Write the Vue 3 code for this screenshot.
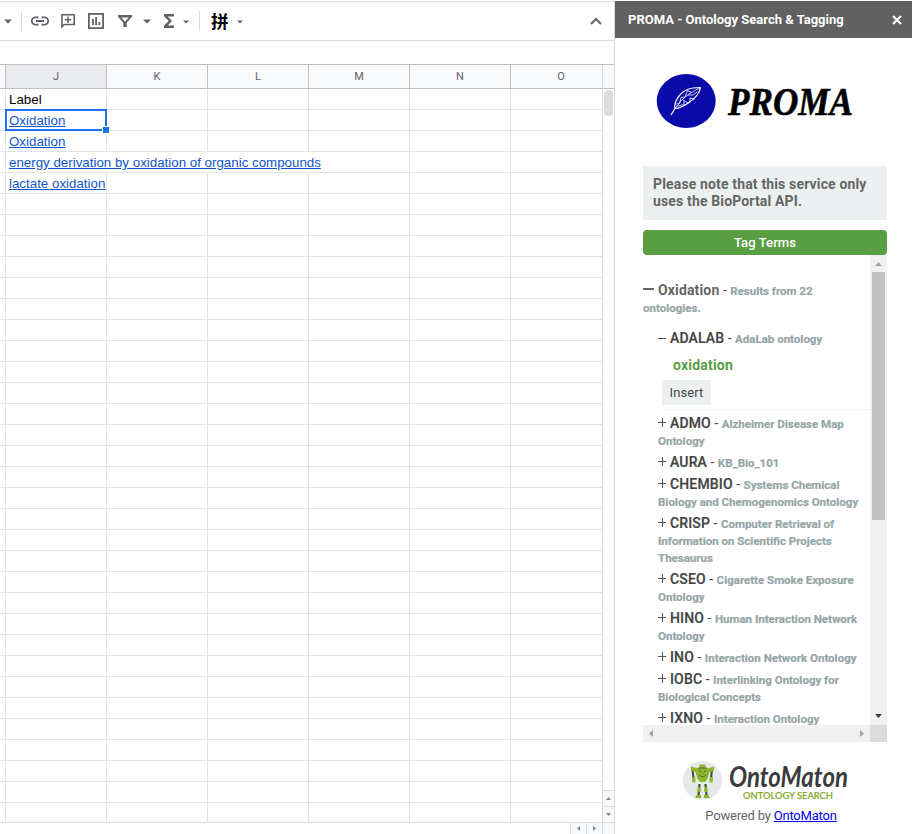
<script setup>
const columns = ['J', 'K', 'L', 'M', 'N', 'O']
const values = [
  { text: 'Label' },
  { text: 'Oxidation', link: true, selected: true },
  { text: 'Oxidation', link: true },
  { text: 'energy derivation by oxidation of organic compounds', link: true, span: 3 },
  { text: 'lactate oxidation', link: true },
]
const rows = Array.from({ length: 35 }, (_, i) => values[i] || { text: '' })

const ontologies = [
  { id: 'ADMO', lines: ['Alzheimer Disease Map', 'Ontology'] },
  { id: 'AURA', lines: ['KB_Bio_101'] },
  { id: 'CHEMBIO', lines: ['Systems Chemical', 'Biology and Chemogenomics Ontology'] },
  { id: 'CRISP', lines: ['Computer Retrieval of', 'Information on Scientific Projects', 'Thesaurus'] },
  { id: 'CSEO', lines: ['Cigarette Smoke Exposure', 'Ontology'] },
  { id: 'HINO', lines: ['Human Interaction Network', 'Ontology'] },
  { id: 'INO', lines: ['Interaction Network Ontology'] },
  { id: 'IOBC', lines: ['Interlinking Ontology for', 'Biological Concepts'] },
  { id: 'IXNO', lines: ['Interaction Ontology'] },
]
</script>

<template>
  <div class="page">
    <main class="sheet">
      <div class="toolbar">
        <svg width="614" height="38" viewBox="0 2 614 38" fill="#5f6368">
          <path d="M4 19.500h8l-4 4z M143 19.500h8l-4 4z" />
          <path d="M183 20.500h6l-3 3z M237 20.500h6l-3 3z" />
          <path d="M21 11h1v20h-1z M199 11h1v20h-1z" fill="#dadce0" />
          <path d="M38.500 17.300H35.500a3.700 3.700 0 0 0 0 7.400h3 M41.500 17.300h3a3.700 3.700 0 0 1 0 7.400h-3 M36 21h8" fill="none" stroke="#5f6368" stroke-width="1.800" />
          <path d="M62 14.800h12.200v9.700H64.300L62 26.800z" fill="none" stroke="#5f6368" stroke-width="1.600" />
          <path d="M67.300 16.600h1.500v2.400h2.400v1.500h-2.400v2.400h-1.500v-2.400h-2.400V19h2.400z" />
          <path d="M88.900 13.900h14.200v14.200H88.900z" fill="none" stroke="#5f6368" stroke-width="1.800" />
          <path d="M92 19h1.800v6H92z M95.200 17H97v8h-1.800z M98.400 22h1.800v3h-1.800z" />
          <path d="M118 15h14v1.800l-5.300 6V27h-3.400v-4.200l-5.300-6z M121.300 17.500l3.700 4.200 3.700-4.200z" fill-rule="evenodd" />
          <path d="M164 14h10v2.500h-6.300l4.300 4.500-4.300 4.500h6.300V28h-10v-2.200l4.800-4.800-4.800-4.800z" />
          <path d="M591 24l5-5 5 5" fill="none" stroke="#5f6368" stroke-width="2" />
          <text x="211" y="28" class="pin">拼</text>
        </svg>
      </div>
      <div class="formula"></div>
      <div class="body">
        <div class="grid">
          <div class="row head">
            <span class="edge"></span>
            <span v-for="(c, i) in columns" :key="c" class="cell" :class="{ active: i === 0 }">{{ c }}</span>
          </div>
          <div class="cells">
            <div v-for="(r, i) in rows" :key="i" class="row">
              <span class="edge"></span>
              <span v-for="(c, j) in columns" :key="c" class="cell" :class="{ open: r.span && j < r.span }">
                <template v-if="j === 0 && r.text">
                  <a v-if="r.link" class="link">{{ r.text }}</a>
                  <span v-else>{{ r.text }}</span>
                </template>
                <i v-if="j === 0 && r.selected" class="selection"></i>
              </span>
            </div>
          </div>
        </div>
        <div class="vscroll">
          <div class="corner"></div>
          <div class="track"><div class="thumb"></div></div>
          <div class="step"><svg width="5" height="3"><path d="M2.500 0L5 3H0z" /></svg></div>
          <div class="step"><svg width="5" height="3"><path d="M2.500 3L5 0H0z" /></svg></div>
        </div>
      </div>
      <div class="hscroll">
        <div class="hstep"><svg width="3" height="5"><path d="M0 2.500L3 0v5z" /></svg></div>
        <div class="hstep"><svg width="3" height="5"><path d="M3 2.500L0 0v5z" /></svg></div>
        <div class="hend"></div>
      </div>
    </main>

    <aside class="sidebar">
      <header class="title">
        <span>PROMA - Ontology Search &amp; Tagging</span>
        <svg width="10" height="10"><path d="M1 1l8 8M9 1L1 9" stroke="#fff" stroke-width="2" /></svg>
      </header>
      <div class="content">
        <svg class="logo" width="244" height="70" viewBox="643 66 244 70">
          <ellipse cx="686.200" cy="101" rx="29.500" ry="27" fill="#0a0aaa" />
          <g fill="none" stroke="#fff" stroke-linejoin="round" stroke-linecap="round">
            <path d="M671.300 114.500L675 108.500C673.500 102 680 92.500 687.500 89.500C692 87.500 697 87.500 700.500 87.500C699.500 93 695 98.500 689 102.500C684 106 680 108.500 675 108.500" stroke-width="1.200" />
            <path d="M675 108.500Q681 99 689 94T700 88M676.500 104l3-.5 1.500-6 4-.5 2.500-6.500 4 2M678 106l6-1.500 0-3M683 100l5 3 2-1 0-4 4 1M688 95l5 0 4-3" stroke-width="0.800" />
          </g>
          <text x="728" y="115" class="proma" textLength="125" lengthAdjust="spacingAndGlyphs">PROMA</text>
        </svg>
        <div class="note">Please note that this service only<br>uses the BioPortal API.</div>
        <button class="tag">Tag Terms</button>
        <div class="results">
          <div class="view">
            <div class="term"><i class="bar"></i><b>Oxidation</b> - <small>Results from 22</small><br><small>ontologies.</small></div>
            <div class="item first"><i class="sign minus"></i><b>ADALAB</b> - <small>AdaLab ontology</small></div>
            <div class="match">oxidation</div>
            <button class="insert">Insert</button>
            <div class="list">
              <div v-for="o in ontologies" :key="o.id" class="item">
                <i class="sign plus"></i><b>{{ o.id }}</b> - <small>{{ o.lines[0] }}</small>
                <small v-for="l in o.lines.slice(1)" :key="l" class="more">{{ l }}</small>
              </div>
            </div>
          </div>
          <div class="rv">
            <svg width="7" height="4"><path d="M3.500 0L7 4H0z" fill="#a3a3a3" /></svg>
            <div class="rthumb"></div>
            <svg width="7" height="4"><path d="M3.500 4L7 0H0z" fill="#404040" /></svg>
          </div>
          <div class="rh">
            <svg width="4" height="7"><path d="M0 3.500L4 0v7z" fill="#a3a3a3" /></svg>
            <svg width="4" height="7"><path d="M4 3.500L0 0v7z" fill="#a3a3a3" /></svg>
          </div>
          <div class="rc"></div>
        </div>
        <svg class="onto" width="244" height="48" viewBox="643 756 244 48">
          <circle cx="702.300" cy="780.500" r="19.600" fill="#e6e8ea" />
          <g>
            <path d="M692.500 768l1.200 13M712 768l-1.200 13M699.500 784l-1 12M705.500 784l1 12" fill="none" stroke="#46503a" stroke-width="2.200" />
            <path d="M699.500 764.500h6v5h-6z M691 766.500l5 1.500h13l5-1.500v4.500l-4.500 1-2 7-2.500 3h-5l-2.500-3-2-7-4.500-1z M692.300 777h3v5.500h-3z M709.700 777h3v5.500h-3z M697.500 787h3.200v5h-3.200z M704.300 787h3.200v5h-3.200z M696.500 795h4.500v3h-6z M704 795h4.500l1.500 3h-6z" fill="#8db62c" />
            <path d="M699 770l2.500 2.500M706 770l-2.500 2.500M699 775.500q3.500 3 7 0M698 768h9" fill="none" stroke="#4c6322" stroke-width="0.900" />
          </g>
          <text x="729" y="787" class="ontomaton" textLength="119" lengthAdjust="spacingAndGlyphs">OntoMaton</text>
          <text x="743" y="798.500" class="search" textLength="90" lengthAdjust="spacingAndGlyphs">ONTOLOGY SEARCH</text>
        </svg>
        <div class="powered">Powered by <a>OntoMaton</a></div>
      </div>
    </aside>
  </div>
</template>

<style>
body { background: #fff; overflow: hidden; }
</style>

<style scoped>
* { box-sizing: border-box; }
.page { display: flex; width: 912px; height: 834px; overflow: hidden; border-top: 1px solid #fff; font-family: Roboto, "Liberation Sans", sans-serif; }
.sheet { width: 615px; border-right: 1px solid #dadce0; border-top: 1px solid #dadce0; display: flex; flex-direction: column; }
.toolbar { height: 39px; border-bottom: 1px solid #dadce0; }
.toolbar svg { display: block; }
.pin { font: 700 17.500px "Noto Sans CJK SC", sans-serif; fill: #000; }
.formula { height: 24px; border-bottom: 1px solid #c0c0c0; }
.body { display: flex; height: 757px; }
.grid { width: 602px; overflow: hidden; }
.row { display: flex; height: 21px; }
.edge { width: 6px; flex: none; border-right: 1px solid #e2e3e3; border-bottom: 1px solid #e2e3e3; }
.cell { position: relative; width: 101px; flex: none; border-right: 1px solid #e2e3e3; border-bottom: 1px solid #e2e3e3; padding-left: 3px; font: 13.333px/21px "Liberation Sans", Arial, sans-serif; white-space: nowrap; color: #000; }
.cell.open { border-right-color: transparent; }
.link { color: #1155cc; text-decoration: underline; }
.head { height: 24px; background: #f8f9fa; }
.head .edge, .head .cell { border-color: #c0c0c0; }
.head .cell { padding: 0; font: 11px/23px Roboto, sans-serif; text-align: center; color: #5f6368; }
.head .active { background: #e8eaed; }
.cells { height: 733px; overflow: hidden; }
.selection { position: absolute; left: -1px; top: -1px; width: 102px; height: 22px; border: 2px solid #1a73e8; z-index: 1; }
.selection::after { content: ""; position: absolute; right: -5px; bottom: -5px; width: 6px; height: 6px; background: #1a73e8; border: 1px solid #fff; }
.vscroll { width: 12px; border-left: 1px solid #dadce0; display: flex; flex-direction: column; }
.corner { height: 24px; background: #f8f9fa; border-bottom: 1px solid #c0c0c0; }
.track { flex: 1; padding: 1px; }
.thumb { width: 9px; height: 26px; border-radius: 4px; background: #dadce0; }
.step { height: 16px; border-top: 1px solid #dadce0; background: #f8f9fa; display: flex; align-items: center; justify-content: center; fill: #80868b; }
.hscroll { height: 12px; border-top: 1px solid #dadce0; display: flex; justify-content: flex-end; }
.hstep { width: 16px; border-left: 1px solid #dadce0; background: #f8f9fa; display: flex; align-items: center; justify-content: center; fill: #80868b; }
.hend { width: 12px; border-left: 1px solid #dadce0; background: #f8f9fa; }
.sidebar { width: 297px; }
.title { height: 37px; background: #616161; color: #fff; display: flex; align-items: center; justify-content: space-between; padding: 0 10px 0 13px; font-size: 13px; font-weight: 700; }
.content { padding: 28px 25px 0 28px; display: flex; flex-direction: column; }
.logo { display: block; }
.proma { font: italic bold 39px "Liberation Serif", serif; fill: #000; stroke: #000; stroke-width: .6; }
.note { margin-top: 30px; height: 54px; padding: 10px; background: #ecf0f1; color: #666; font-size: 14px; font-weight: 700; line-height: 17px; letter-spacing: .15px; white-space: nowrap; }
.tag { margin-top: 10px; height: 25px; padding: 0; border: 0; border-radius: 4px; background: #5a9e43; color: #fff; font: 500 13px/25px Roboto, sans-serif; letter-spacing: .1px; }
.results { display: grid; grid-template: 470px 17px / 227px 17px; }
.view { overflow: hidden; padding-top: 27px; font-size: 14px; line-height: 17px; color: #444; white-space: nowrap; }
.view b { font-weight: 500; letter-spacing: .15px; -webkit-text-stroke: .2px #444; }
.view small { font-size: 11.500px; line-height: 1; font-weight: 700; color: #95a5a6; -webkit-text-stroke: .2px #95a5a6; }
.view .term { height: 34px; }
.view .term b { font-weight: 700; color: #666; -webkit-text-stroke: 0; }
.bar { display: inline-block; width: 11px; height: 2px; margin-right: 4px; background: #666; vertical-align: 5px; }
.item { margin: 0 0 5px 15px; }
.item.first { height: 17px; margin-top: 14px; margin-bottom: 0; }
.view .more { display: block; height: 17px; line-height: 18px; }
.sign { display: inline-block; width: 9px; height: 9px; margin-right: 3px; background: linear-gradient(#555, #555) 0 4px / 8px 1px no-repeat; }
.plus { vertical-align: 1px; background: linear-gradient(#555, #555) 0 4px / 8px 1px no-repeat, linear-gradient(#555, #555) 4px 0 / 1px 9px no-repeat; }
.match { margin: 10px 0 0 30px; font-weight: 700; color: #5a9e43; letter-spacing: .2px; }
.insert { display: block; margin: 6px 0 0 19px; width: 49px; height: 25px; padding: 0; border: 0; background: #ecf0f1; color: #444; font: 13px/25px Roboto, sans-serif; letter-spacing: .1px; }
.list { margin-top: 4px; padding-top: 6px; background: linear-gradient(#f2f3f3, #f2f3f3) 20px 0 / 207px 1px no-repeat; }
.rv { background: #f1f1f1; display: flex; flex-direction: column; align-items: center; padding: 7px 0; }
.rv svg { flex: none; }
.rthumb { flex: none; width: 13px; height: 248px; margin: 6px 0 auto; background: #c1c1c1; }
.rh { background: #f1f1f1; display: flex; align-items: center; justify-content: space-between; padding: 0 6px; }
.rc { background: #dcdcdc; }
.onto { display: block; margin-top: 14px; }
.ontomaton { font: italic 700 28px Lato, sans-serif; fill: #3b3b3f; }
.search { font: 500 10px Lato, sans-serif; fill: #7fa828; stroke: #7fa828; stroke-width: .2; }
.powered { margin: 3px 0 0 12px; font-size: 13px; line-height: 17px; letter-spacing: -.2px; text-align: center; color: #666; }
.powered a { color: #0000ee; text-decoration: underline; }
</style>
